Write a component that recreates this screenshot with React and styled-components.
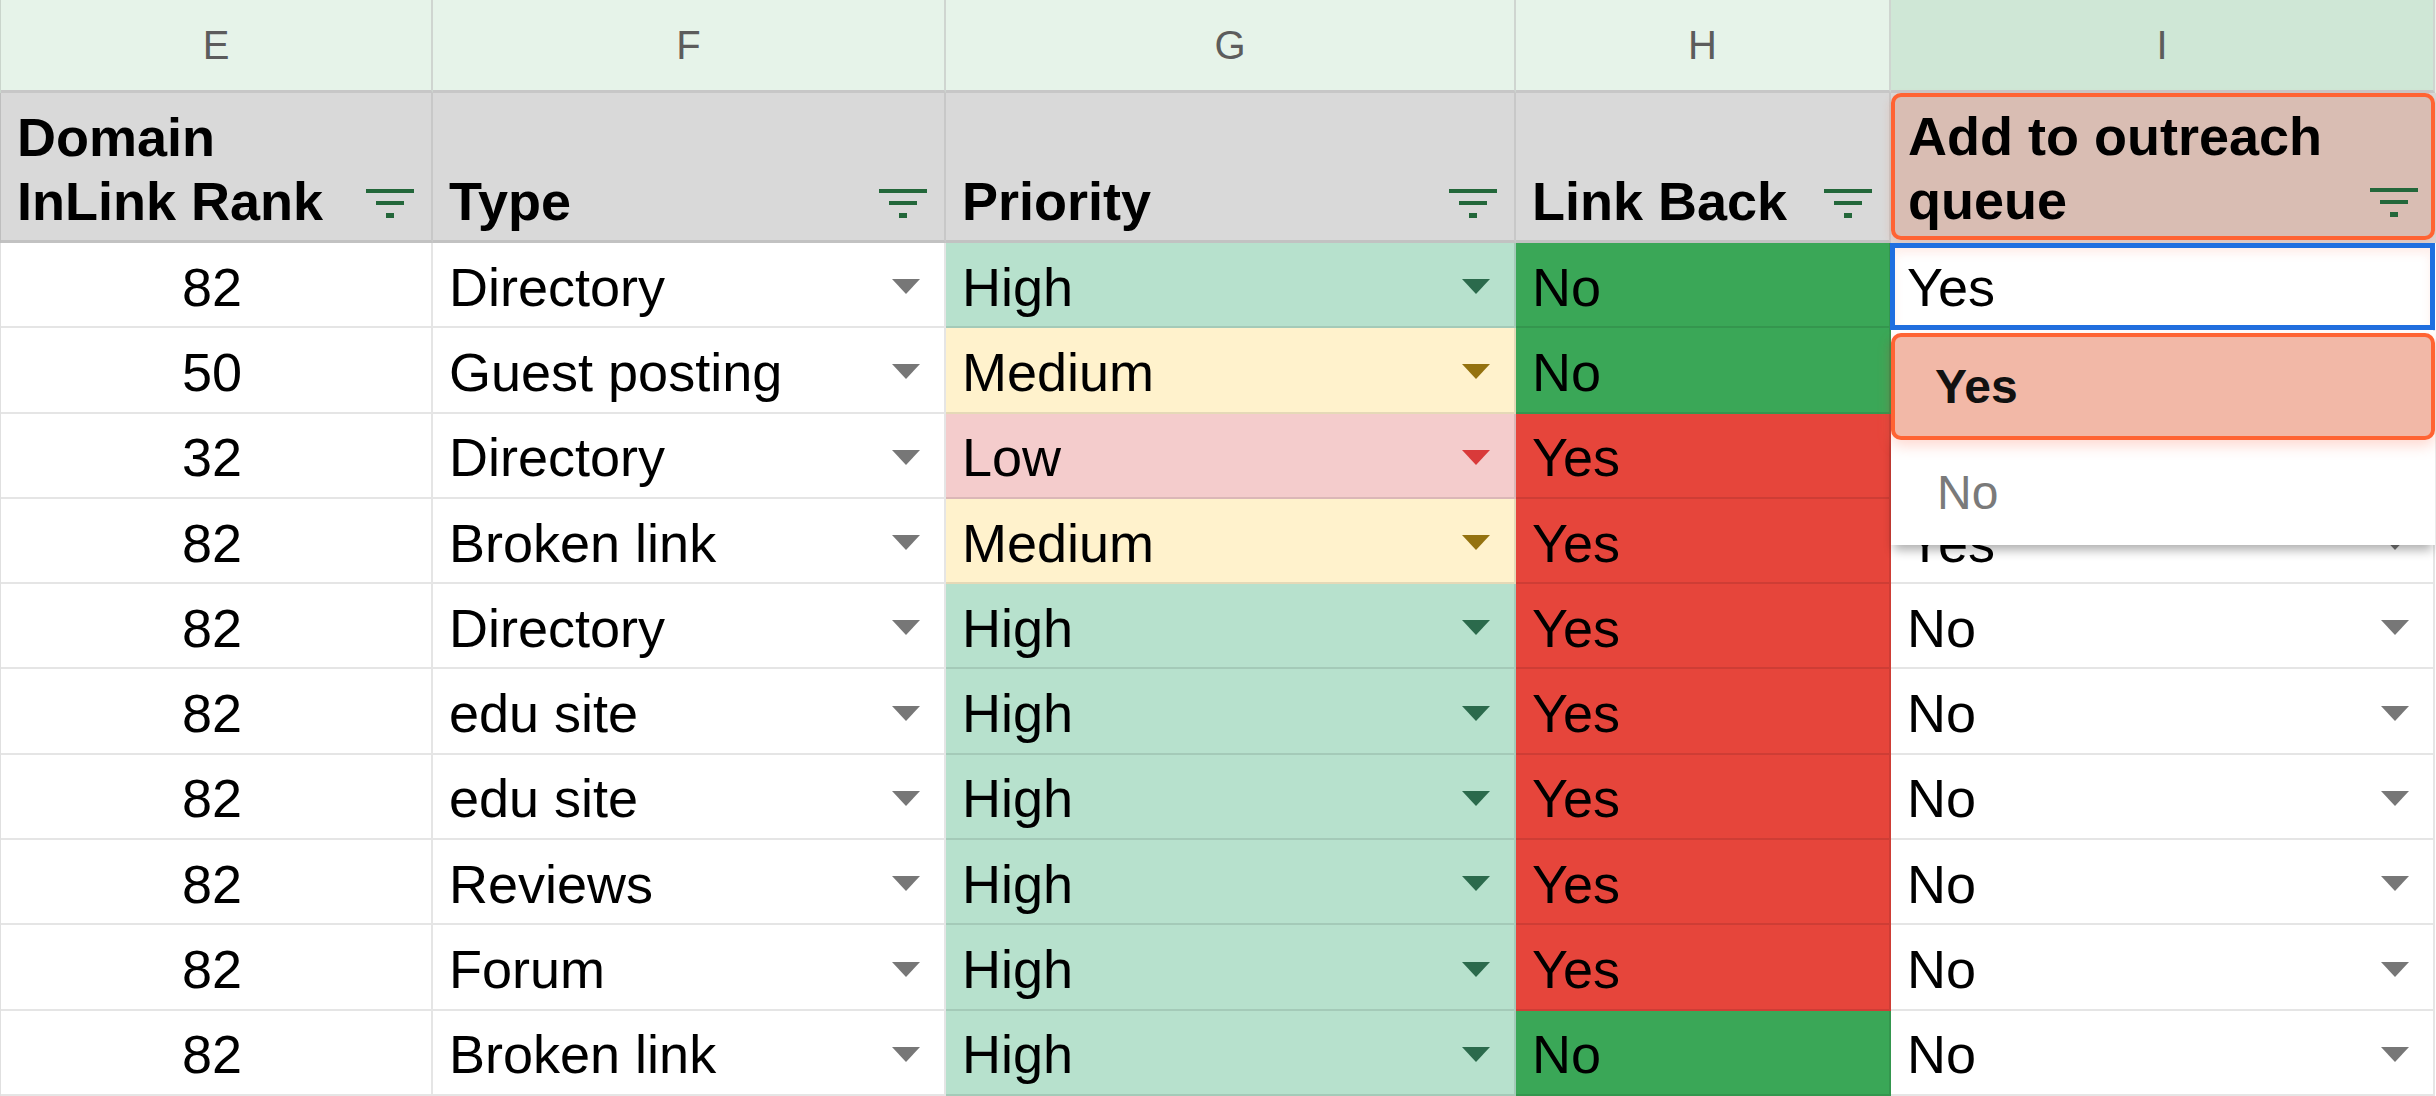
import React from "react";
import styled, { createGlobalStyle, css } from "styled-components";

const GlobalStyle = createGlobalStyle`
  *, *::before, *::after { box-sizing: border-box; }
  html, body { margin: 0; padding: 0; background: #fff; }
  body {
    font-family: "Liberation Sans", Arial, sans-serif;
    overflow: hidden;
  }
`;

const COLS = "432px 513px 570px 375px 544px";

const PRIORITY = {
  High: { bg: "#b7e1cd", arrow: "#2b6a4c" },
  Medium: { bg: "#fff2cc", arrow: "#94720f" },
  Low: { bg: "#f4cccc", arrow: "#d93a3a" },
};

const LINK = {
  Yes: "#e6453b",
  No: "#3aa757",
};

// the queue value of rows 2 and 3 sits under the open menu
const rows = [
  [82, "Directory", "High", "No", "Yes"],
  [50, "Guest posting", "Medium", "No", ""],
  [32, "Directory", "Low", "Yes", ""],
  [82, "Broken link", "Medium", "Yes", "Yes"],
  [82, "Directory", "High", "Yes", "No"],
  [82, "edu site", "High", "Yes", "No"],
  [82, "edu site", "High", "Yes", "No"],
  [82, "Reviews", "High", "Yes", "No"],
  [82, "Forum", "High", "Yes", "No"],
  [82, "Broken link", "High", "No", "No"],
];

const Sheet = styled.div`
  width: 2436px;
  height: 1096px;
  overflow: hidden;
  display: flex;
  flex-direction: column;
`;

const Row = styled.div`
  display: grid;
  grid-template-columns: ${COLS};
  flex-shrink: 0;
  border-left: 1px solid rgba(0, 0, 0, 0.12);
`;

const LetterRow = styled(Row)`
  height: 93px;
  background: #e6f3e9;
`;

const LetterCell = styled.div`
  display: flex;
  align-items: center;
  justify-content: center;
  font-size: 40px;
  color: #5c5c5c;
  background: ${(p) => (p.$active ? "#cfe7d6" : "transparent")};
  border-right: 2px solid #cfd5d0;
  border-bottom: 3px solid #c7c7c7;
`;

const HeaderRow = styled(Row)`
  height: 150px;
  background: #d9d9d9;
`;

const HeaderCell = styled.div`
  display: flex;
  align-items: flex-end;
  justify-content: space-between;
  gap: 10px;
  padding: 0 17px 7px 16px;
  font-size: 54px;
  font-weight: 700;
  line-height: 64px;
  color: #000;
  border-right: 2px solid #c8c8c8;
  border-bottom: 3px solid #c2c2c2;

  ${(p) =>
    p.$highlight &&
    css`
      position: relative;
      z-index: 2;
      margin-bottom: 3px;
      padding: 0 13px 4px 13px;
      border: 4px solid #ff6333;
      border-radius: 10px;
      background: #d9bdb3;
      box-shadow: 0 4px 10px rgba(255, 110, 70, 0.22);
    `}
`;

const HeaderText = styled.span`
  flex: 1;
`;

const FilterIcon = styled.svg`
  flex-shrink: 0;
  margin-bottom: 15px;
`;

const DataRow = styled(Row)`
  height: 85.3px;
`;

const Cell = styled.div`
  position: relative;
  display: flex;
  align-items: center;
  justify-content: ${(p) => (p.$center ? "center" : "space-between")};
  padding: 4px 24px 0 16px;
  font-size: 54px;
  color: #000;
  white-space: nowrap;
  background: ${(p) => p.$bg || "#fff"};
  border-right: 2px solid rgba(0, 0, 0, 0.1);
  border-bottom: 2px solid rgba(0, 0, 0, 0.1);

  ${(p) =>
    p.$selected &&
    css`
      z-index: 4;
      &::after {
        content: "";
        position: absolute;
        top: 0;
        left: -1px;
        right: -2px;
        bottom: -4px;
        border: 5px solid #1f6fe0;
        box-shadow: inset 0 6px 8px rgba(255, 120, 90, 0.12);
        pointer-events: none;
      }
    `}
`;

const Menu = styled.div`
  position: absolute;
  top: calc(100% + 5px);
  left: 0;
  right: -2px;
  z-index: 5;
  padding-top: 2px;
  background: #fff;
  box-shadow: 0 8px 10px -3px rgba(0, 0, 0, 0.32);
`;

const MenuItem = styled.div`
  display: flex;
  align-items: center;
  height: 105px;
  padding-left: 46px;
  font-size: 48px;
  color: #7a7a7a;

  ${(p) =>
    p.$active &&
    css`
      height: 107px;
      padding-left: 40px;
      font-weight: 700;
      color: #111;
      background: #f2b8a7;
      border: 4px solid #ff6333;
      border-radius: 10px;
      box-shadow: 0 6px 14px rgba(255, 120, 90, 0.28);
    `}
`;

function Filter() {
  return (
    <FilterIcon width="48" height="29" viewBox="0 0 48 29">
      <rect x="0" y="0" width="48" height="4" fill="#23673a" />
      <rect x="10" y="12" width="28" height="4" fill="#23673a" />
      <rect x="20" y="24" width="8" height="5" fill="#23673a" />
    </FilterIcon>
  );
}

function Arrow({ color = "#777" }) {
  return (
    <svg width="28" height="15" viewBox="0 0 28 15">
      <polygon points="0,0 28,0 14,15" fill={color} />
    </svg>
  );
}

export default function App() {
  return (
    <>
      <GlobalStyle />
      <Sheet>
        <LetterRow>
          {["E", "F", "G", "H", "I"].map((l) => (
            <LetterCell key={l} $active={l === "I"}>
              {l}
            </LetterCell>
          ))}
        </LetterRow>

        <HeaderRow>
          <HeaderCell>
            <HeaderText>Domain InLink Rank</HeaderText>
            <Filter />
          </HeaderCell>
          <HeaderCell>
            <HeaderText>Type</HeaderText>
            <Filter />
          </HeaderCell>
          <HeaderCell>
            <HeaderText>Priority</HeaderText>
            <Filter />
          </HeaderCell>
          <HeaderCell>
            <HeaderText>Link Back</HeaderText>
            <Filter />
          </HeaderCell>
          <HeaderCell $highlight>
            <HeaderText>Add to outreach queue</HeaderText>
            <Filter />
          </HeaderCell>
        </HeaderRow>

        {rows.map(([rank, type, priority, link, queue], i) => (
          <DataRow key={i}>
            <Cell $center>{rank}</Cell>
            <Cell>
              {type}
              <Arrow />
            </Cell>
            <Cell $bg={PRIORITY[priority].bg}>
              {priority}
              <Arrow color={PRIORITY[priority].arrow} />
            </Cell>
            <Cell $bg={LINK[link]}>{link}</Cell>
            {i === 0 ? (
              <Cell $selected>
                {queue}
                <Menu>
                  <MenuItem $active>Yes</MenuItem>
                  <MenuItem>No</MenuItem>
                </Menu>
              </Cell>
            ) : (
              <Cell>
                {queue}
                <Arrow />
              </Cell>
            )}
          </DataRow>
        ))}
      </Sheet>
    </>
  );
}
